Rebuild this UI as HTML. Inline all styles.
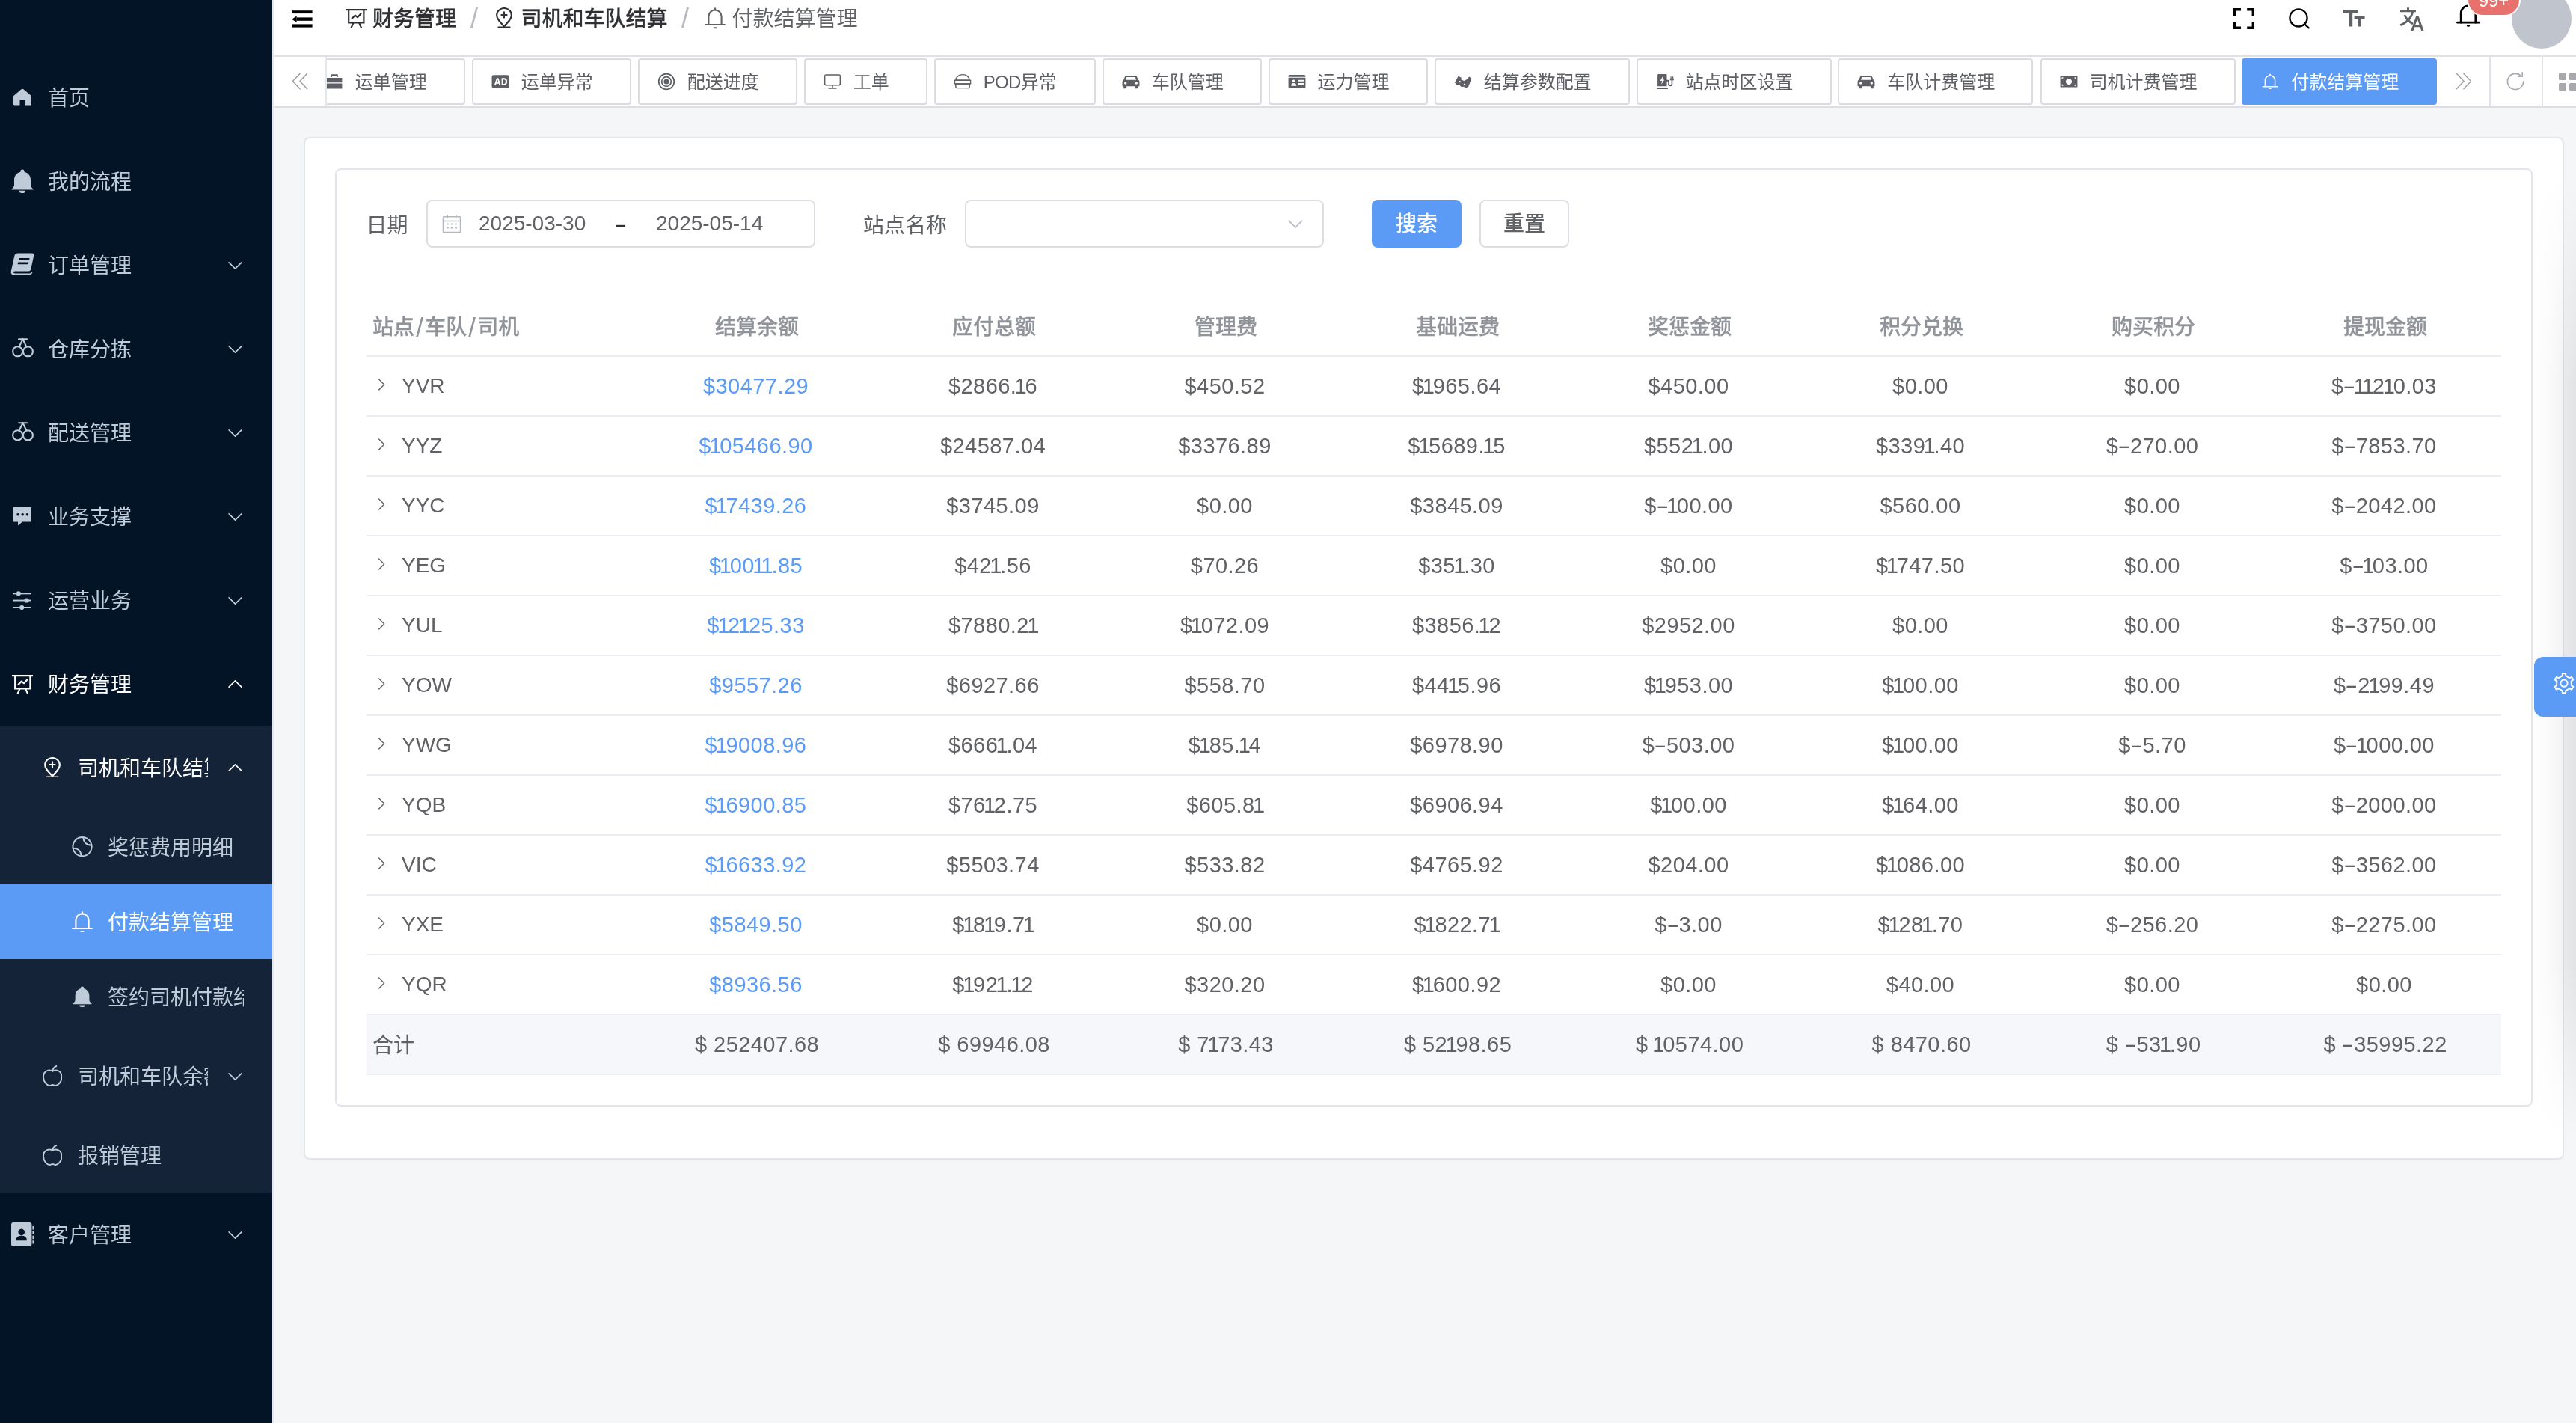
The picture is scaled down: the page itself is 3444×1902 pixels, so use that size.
<!DOCTYPE html><html lang="zh-CN"><head><meta charset="utf-8"><title>付款结算管理</title><style>
*{box-sizing:border-box;margin:0;padding:0}
html,body{width:3444px;height:1902px;overflow:hidden;background:#f5f6f8;font-family:"Liberation Sans","Noto Sans CJK SC",sans-serif;color:#606266}
svg{display:block}
#side,#head,#tabs,#main{will-change:transform}
#main{position:absolute;left:0;top:0;width:3444px;height:1902px;z-index:0}
#side,#head,#tabs{z-index:2}
#side{position:absolute;left:0;top:0;width:364px;height:1902px;background:#041427;overflow:hidden}
#sub{position:absolute;left:0;top:970px;width:364px;height:624px;background:#152339}
.mi{position:absolute;left:0;width:364px;color:#bfcbd9;font-size:28px;white-space:nowrap}
.mi .ic{position:absolute;top:50%;margin-top:-14px}
.mi .tx{position:absolute;top:-1px;height:100%;overflow:hidden;display:flex;align-items:center}
.mi .ar{position:absolute;left:301.5px;top:50%;margin-top:-12.5px}
.mi.w{color:#fff}
.mi.act{background:#5b9bf6;color:#fff}
#head{position:absolute;left:364px;top:-26px;width:3080px;height:102px;background:#fff;border-bottom:2px solid #dfe1e6}
.abs{position:absolute}
#tabs{position:absolute;left:364px;top:76px;width:3080px;height:68px;background:#fff;border-bottom:2px solid #dcdee3;}
.tab{position:absolute;top:2px;height:62px;border:2px solid #dbdce1;border-radius:4px;background:#fff;color:#5d5f65;font-size:24px;white-space:nowrap}
.tab .ic{position:absolute;left:24px;top:17px}
.tab .tx{position:absolute;left:64px;top:0;line-height:59px}
.tab.on{background:#5b9bf6;border-color:#5b9bf6;color:#fff}
#card1{position:absolute;left:406px;top:183px;width:3022px;height:1367px;background:#fff;border:2px solid #e4e5eb;border-radius:8px;box-shadow:0 1px 6px rgba(0,0,0,.025)}
#card2{position:absolute;left:448px;top:225px;width:2938px;height:1254px;background:#fff;border:2px solid #e4e5eb;border-radius:8px;box-shadow:0 1px 6px rgba(0,0,0,.02)}
.lbl{position:absolute;font-size:28px;color:#606266;line-height:64px;top:269.5px}
.inp{position:absolute;top:267px;height:64px;border:2px solid #dcdee3;border-radius:8px;background:#fff}
.btn{position:absolute;top:267px;height:64px;width:120px;border-radius:8px;font-size:28px;line-height:62px;text-align:center;font-weight:500}
#tbl{position:absolute;left:490px;top:397px;width:2854px}
.r{position:absolute;left:0;width:2854px;height:80px;border-bottom:2px solid #ebedf2}
.c{position:absolute;top:0;height:78px;line-height:78px;font-size:28px;text-align:center;white-space:nowrap}
.n{font-size:29px;letter-spacing:.45px}
.o{font-style:normal;margin:0 -2.7px}
.m{display:inline-block;font-style:normal;transform:scaleX(1.75);margin:0 2.8px}
.hd .c{color:#909399;font-weight:500;-webkit-text-stroke:0.3px currentColor;line-height:82px}
.hd .c i{font-style:normal;margin:0 2.2px;font-weight:400;-webkit-text-stroke:0;font-size:35px;position:relative;top:3px;line-height:1px}
.c.b{color:#5b9bf6}
.ft{background:#f5f7fa}
</style></head><body>
<div id="side"><div id="sub"></div>
<div class="mi " style="top:74px;height:112px"><span class="ic" style="left:16px"><svg viewBox="0 0 1024 1024" width="28" height="28" fill="currentColor" style="" ><path d="M512 96 Q540 96 566 118 L930 430 Q950 448 950 480 V880 Q950 930 900 930 H640 V640 H384 V930 H124 Q74 930 74 880 V480 Q74 448 94 430 L458 118 Q484 96 512 96Z"/></svg></span><span class="tx" style="left:64px;width:262px">首页</span></div>
<div class="mi " style="top:186px;height:112px"><svg viewBox="0 0 30 32" width="30" height="32" fill="currentColor" style="position:absolute;left:15.00px;top:39.60px;"><path d="M15 0.5 a2.6 2.6 0 0 1 2.6 2.6 v0.6 C23.2 5 26 9.6 26 14.6 V21 C26 23.4 27.6 25 29.4 26.6 Q30 27.4 29 27.6 H1 Q0 27.4 0.6 26.6 C2.4 25 4 23.4 4 21 V14.6 C4 9.6 6.8 5 12.4 3.7 v-0.6 A2.6 2.6 0 0 1 15 0.5Z"/><path d="M10.8 28.8 H19.2 A4.2 3.4 0 0 1 10.8 28.8Z"/></svg><span class="tx" style="left:64px;width:262px">我的流程</span></div>
<div class="mi " style="top:298px;height:112px"><svg viewBox="0 0 32 30" width="32" height="30" fill="currentColor" style="position:absolute;left:14.00px;top:40.40px;"><path d="M9.6 0.6 H28.6 Q32 0.6 31.2 4 L27.2 22 Q26.6 24.6 24 24.6 H6.2 Q4 24.6 4 26 Q4 27.4 6.2 27.4 H25.6 Q27.4 27.4 28.4 25.4 L29.4 25.8 Q28.4 29.6 24.6 29.6 H5 Q0 29.6 0.8 24.6 L5.4 3.8 Q6.2 0.6 9.6 0.6Z M11.4 7 L10.8 9.6 H25 L25.6 7Z M10.2 12.6 L9.6 15.2 H23.8 L24.4 12.6Z" fill-rule="evenodd"/></svg><span class="tx" style="left:64px;width:214px">订单管理</span><span class="ar"><svg viewBox="0 0 1024 1024" width="25" height="25" fill="currentColor" style="" ><path fill="none" stroke="currentColor" stroke-width="70" stroke-linecap="round" stroke-linejoin="round" d="M170 360 L512 700 L854 360"/></svg></span></div>
<div class="mi " style="top:410px;height:112px"><svg viewBox="0 0 29 26" width="29" height="26" fill="currentColor" style="position:absolute;left:15.50px;top:42.00px;"><g fill="none" stroke="currentColor" stroke-width="2.1" stroke-linecap="round" stroke-linejoin="round"><circle cx="7.6" cy="17.8" r="6.5"/><circle cx="21.4" cy="17.8" r="6.5"/><path d="M9 1.2 H20"/><path d="M14.5 1.2 L9.6 11.6 M14.5 1.2 L19.4 11.6"/></g></svg><span class="tx" style="left:64px;width:214px">仓库分拣</span><span class="ar"><svg viewBox="0 0 1024 1024" width="25" height="25" fill="currentColor" style="" ><path fill="none" stroke="currentColor" stroke-width="70" stroke-linecap="round" stroke-linejoin="round" d="M170 360 L512 700 L854 360"/></svg></span></div>
<div class="mi " style="top:522px;height:112px"><svg viewBox="0 0 29 26" width="29" height="26" fill="currentColor" style="position:absolute;left:15.50px;top:42.00px;"><g fill="none" stroke="currentColor" stroke-width="2.1" stroke-linecap="round" stroke-linejoin="round"><circle cx="7.6" cy="17.8" r="6.5"/><circle cx="21.4" cy="17.8" r="6.5"/><path d="M9 1.2 H20"/><path d="M14.5 1.2 L9.6 11.6 M14.5 1.2 L19.4 11.6"/></g></svg><span class="tx" style="left:64px;width:214px">配送管理</span><span class="ar"><svg viewBox="0 0 1024 1024" width="25" height="25" fill="currentColor" style="" ><path fill="none" stroke="currentColor" stroke-width="70" stroke-linecap="round" stroke-linejoin="round" d="M170 360 L512 700 L854 360"/></svg></span></div>
<div class="mi " style="top:634px;height:112px"><svg viewBox="0 0 24.4 24.6" width="24.4" height="24.6" fill="currentColor" style="position:absolute;left:17.80px;top:44.00px;"><path d="M0 0 H24.4 V19.4 H12 L6 24.6 V19.4 H0Z M6 8 a1.7 1.7 0 1 0 0.01 0Z M12.2 8 a1.7 1.7 0 1 0 0.01 0Z M18.4 8 a1.7 1.7 0 1 0 0.01 0Z" fill-rule="evenodd"/></svg><span class="tx" style="left:64px;width:214px">业务支撑</span><span class="ar"><svg viewBox="0 0 1024 1024" width="25" height="25" fill="currentColor" style="" ><path fill="none" stroke="currentColor" stroke-width="70" stroke-linecap="round" stroke-linejoin="round" d="M170 360 L512 700 L854 360"/></svg></span></div>
<div class="mi " style="top:746px;height:112px"><svg viewBox="0 0 24.4 25" width="24.4" height="25" fill="currentColor" style="position:absolute;left:17.80px;top:44.10px;"><g><rect x="0" y="2.4" width="24.4" height="1.9"/><rect x="0" y="11.6" width="24.4" height="1.9"/><rect x="0" y="21" width="24.4" height="1.9"/><circle cx="6.8" cy="3.3" r="3.1"/><circle cx="17.6" cy="12.5" r="3.1"/><circle cx="11.2" cy="22" r="3.1"/></g></svg><span class="tx" style="left:64px;width:214px">运营业务</span><span class="ar"><svg viewBox="0 0 1024 1024" width="25" height="25" fill="currentColor" style="" ><path fill="none" stroke="currentColor" stroke-width="70" stroke-linecap="round" stroke-linejoin="round" d="M170 360 L512 700 L854 360"/></svg></span></div>
<div class="mi w" style="top:858px;height:112px"><svg viewBox="0 0 28.6 26" width="28.6" height="26" fill="currentColor" style="position:absolute;left:15.70px;top:43.80px;"><g fill="none" stroke="currentColor" stroke-width="2.2" stroke-linejoin="miter" stroke-linecap="butt"><path d="M0 1.1 H28.6"/><path d="M4.2 1.1 V18.4 H24.4 V1.1"/><path d="M8.6 12.8 L12.8 8.6 L16 11.2 L20.6 6.2" stroke-linecap="round" stroke-linejoin="round"/><path d="M10.4 18.6 L7.4 25.6 M18.2 18.6 L21.2 25.6" stroke-linecap="round"/></g></svg><span class="tx" style="left:64px;width:214px">财务管理</span><span class="ar"><svg viewBox="0 0 1024 1024" width="25" height="25" fill="currentColor" style="" ><path fill="none" stroke="currentColor" stroke-width="70" stroke-linecap="round" stroke-linejoin="round" d="M170 664 L512 324 L854 664"/></svg></span></div>
<div class="mi w" style="top:970px;height:112px"><svg viewBox="0 0 22 27.6" width="22" height="27.6" fill="currentColor" style="position:absolute;left:59.00px;top:41.90px;"><g fill="none" stroke="currentColor" stroke-width="2.1" stroke-linecap="round" stroke-linejoin="round"><path d="M11 25.2 C5.4 19.4 1.1 14.8 1.1 10.4 A9.9 9.4 0 0 1 20.9 10.4 C20.9 14.8 16.6 19.4 11 25.2Z"/><path d="M11 6.4 V13.6 M7.4 10 H14.6"/><path d="M3.4 26.5 H18.6"/></g></svg><span class="tx" style="left:104px;width:174px">司机和车队结算</span><span class="ar"><svg viewBox="0 0 1024 1024" width="25" height="25" fill="currentColor" style="" ><path fill="none" stroke="currentColor" stroke-width="70" stroke-linecap="round" stroke-linejoin="round" d="M170 664 L512 324 L854 664"/></svg></span></div>
<div class="mi " style="top:1082px;height:100px"><svg viewBox="0 0 28 27.4" width="28" height="27.4" fill="currentColor" style="position:absolute;left:96.00px;top:36.30px;"><g fill="none" stroke="currentColor" stroke-width="2"><circle cx="14" cy="13.7" r="12.6"/><path d="M15.4 1.2 C15.6 8 20 11.6 26.4 11.6"/><path d="M1.6 15.8 C8 15.8 12.4 19.4 12.6 26.2"/></g></svg><span class="tx" style="left:144px;width:182px">奖惩费用明细</span></div>
<div class="mi act" style="top:1182px;height:100px"><svg viewBox="0 0 28 28.4" width="28" height="28.4" fill="currentColor" style="position:absolute;left:96.00px;top:35.80px;"><g fill="none" stroke="currentColor" stroke-width="2.1" stroke-linecap="round" stroke-linejoin="round"><path d="M14 3.4 V1.2"/><path d="M5.4 23 V12 A8.6 8.6 0 0 1 22.6 12 V23"/><path d="M1.1 23 H26.9"/><path d="M12.6 27.2 H15.4"/></g></svg><span class="tx" style="left:144px;width:182px">付款结算管理</span></div>
<div class="mi " style="top:1282px;height:100px"><svg viewBox="0 0 26 28" width="26" height="28" fill="currentColor" style="position:absolute;left:97.00px;top:36.00px;"><path d="M13 0.4 a2.2 2.2 0 0 1 2.2 2.2 v0.6 C20 4.4 22.4 8.4 22.4 12.8 V18.4 C22.4 20.4 23.8 21.8 25.4 23.2 Q26 24 25 24.2 H1 Q0 24 0.6 23.2 C2.2 21.8 3.6 20.4 3.6 18.4 V12.8 C3.6 8.4 6 4.4 10.8 3.2 v-0.6 A2.2 2.2 0 0 1 13 0.4Z"/><path d="M9.2 25.4 H16.8 A3.8 2.8 0 0 1 9.2 25.4Z"/></svg><span class="tx" style="left:144px;width:182px">签约司机付款结算</span></div>
<div class="mi " style="top:1382px;height:112px"><svg viewBox="0 0 26.6 28" width="26.6" height="28" fill="currentColor" style="position:absolute;left:56.70px;top:42.00px;"><g fill="none" stroke="currentColor" stroke-width="1.9" stroke-linecap="round" stroke-linejoin="round"><path d="M13.3 7.8 C10 5.4 1 6 1 15.6 C1 22.6 6.4 27 9 27 C11 27 12 26 13.3 26 C14.6 26 15.6 27 17.6 27 C20.2 27 25.6 22.6 25.6 15.6 C25.6 6 16.6 5.4 13.3 7.8Z"/><path d="M13.3 7.6 C13.6 4.4 15.4 2.2 18.4 1"/></g></svg><span class="tx" style="left:104px;width:174px">司机和车队余额</span><span class="ar"><svg viewBox="0 0 1024 1024" width="25" height="25" fill="currentColor" style="" ><path fill="none" stroke="currentColor" stroke-width="70" stroke-linecap="round" stroke-linejoin="round" d="M170 360 L512 700 L854 360"/></svg></span></div>
<div class="mi " style="top:1494px;height:100px"><svg viewBox="0 0 26.6 28" width="26.6" height="28" fill="currentColor" style="position:absolute;left:56.70px;top:36.00px;"><g fill="none" stroke="currentColor" stroke-width="1.9" stroke-linecap="round" stroke-linejoin="round"><path d="M13.3 7.8 C10 5.4 1 6 1 15.6 C1 22.6 6.4 27 9 27 C11 27 12 26 13.3 26 C14.6 26 15.6 27 17.6 27 C20.2 27 25.6 22.6 25.6 15.6 C25.6 6 16.6 5.4 13.3 7.8Z"/><path d="M13.3 7.6 C13.6 4.4 15.4 2.2 18.4 1"/></g></svg><span class="tx" style="left:104px;width:222px">报销管理</span></div>
<div class="mi " style="top:1594px;height:112px"><svg viewBox="0 0 30.4 32" width="30.4" height="32" fill="currentColor" style="position:absolute;left:14.80px;top:40.00px;"><path d="M3 0 H24.4 Q27.4 0 27.4 3 V29 Q27.4 32 24.4 32 H3 Q0 32 0 29 V3 Q0 0 3 0Z M13.7 8.6 a4.3 4.3 0 1 0 0.01 0Z M6.6 23.4 Q6.6 17.8 13.7 17.8 Q20.8 17.8 20.8 23.4 V24.2 H6.6Z M28.4 5 h2 v4.4 h-2Z M28.4 11.4 h2 v4.4 h-2Z M28.4 17.8 h2 v4.4 h-2Z M28.4 24.2 h2 v4.4 h-2Z" fill-rule="evenodd"/></svg><span class="tx" style="left:64px;width:214px">客户管理</span><span class="ar"><svg viewBox="0 0 1024 1024" width="25" height="25" fill="currentColor" style="" ><path fill="none" stroke="currentColor" stroke-width="70" stroke-linecap="round" stroke-linejoin="round" d="M170 360 L512 700 L854 360"/></svg></span></div>
</div>
<div id="head">
<svg viewBox="0 0 28 23" width="28" height="23" fill="#000" style="position:absolute;left:26px;top:39.5px"><rect x="0" y="0.2" width="27.6" height="3.9"/><rect x="6.6" y="9.4" width="21" height="4.4"/><rect x="0" y="18.4" width="27.6" height="4.2"/><path d="M0.3 11.7 L6.6 7.4 V16Z"/></svg>
<svg viewBox="0 0 28.6 26" width="28.6" height="26" fill="currentColor" style="position:absolute;left:98.00px;top:37.80px;color:#2f3033"><g fill="none" stroke="currentColor" stroke-width="2.2" stroke-linejoin="miter" stroke-linecap="butt"><path d="M0 1.1 H28.6"/><path d="M4.2 1.1 V18.4 H24.4 V1.1"/><path d="M8.6 12.8 L12.8 8.6 L16 11.2 L20.6 6.2" stroke-linecap="round" stroke-linejoin="round"/><path d="M10.4 18.6 L7.4 25.6 M18.2 18.6 L21.2 25.6" stroke-linecap="round"/></g></svg>
<span class="abs" style="left:134px;top:28px;line-height:48px;font-size:28px;font-weight:500;-webkit-text-stroke:0.3px currentColor;color:#2f3033;white-space:nowrap">财务管理</span>
<span class="abs" style="left:265px;top:27px;line-height:48px;font-size:36px;color:#b8bac2">/</span>
<svg viewBox="0 0 22 27.6" width="22" height="27.6" fill="currentColor" style="position:absolute;left:299.00px;top:36.10px;color:#2f3033"><g fill="none" stroke="currentColor" stroke-width="2.1" stroke-linecap="round" stroke-linejoin="round"><path d="M11 25.2 C5.4 19.4 1.1 14.8 1.1 10.4 A9.9 9.4 0 0 1 20.9 10.4 C20.9 14.8 16.6 19.4 11 25.2Z"/><path d="M11 6.4 V13.6 M7.4 10 H14.6"/><path d="M3.4 26.5 H18.6"/></g></svg>
<span class="abs" style="left:332.5px;top:28px;line-height:48px;font-size:28px;font-weight:500;-webkit-text-stroke:0.3px currentColor;color:#2f3033;white-space:nowrap">司机和车队结算</span>
<span class="abs" style="left:547px;top:27px;line-height:48px;font-size:36px;color:#b8bac2">/</span>
<svg viewBox="0 0 28 28.4" width="28" height="28.4" fill="currentColor" style="position:absolute;left:577.80px;top:36.40px;color:#606266"><g fill="none" stroke="currentColor" stroke-width="2.1" stroke-linecap="round" stroke-linejoin="round"><path d="M14 3.4 V1.2"/><path d="M5.4 23 V12 A8.6 8.6 0 0 1 22.6 12 V23"/><path d="M1.1 23 H26.9"/><path d="M12.6 27.2 H15.4"/></g></svg>
<span class="abs" style="left:614.5px;top:28px;line-height:48px;font-size:28px;color:#606266;white-space:nowrap">付款结算管理</span>
<svg viewBox="0 0 28.2 28" width="28.2" height="28" fill="#000" style="position:absolute;left:2621.6px;top:37px"><path d="M0 0 H10 V3.6 H3.6 V10 H0Z M18.2 0 H28.2 V10 H24.6 V3.6 H18.2Z M0 18 H3.6 V24.4 H10 V28 H0Z M24.6 18 H28.2 V28 H18.2 V24.4 H24.6Z"/></svg>
<svg viewBox="0 0 30 30" width="30" height="30" style="position:absolute;left:2695px;top:36px"><g fill="none" stroke="#000" stroke-width="2.3" stroke-linecap="round"><circle cx="14" cy="13.9" r="11.6"/><path d="M22.6 22.6 L27.6 27.4"/></g></svg>
<svg viewBox="0 0 29 23" width="29" height="23" fill="#606266" style="position:absolute;left:2769px;top:39px"><path d="M0 0 H19 V4.4 H12.2 V22.6 H7 V4.4 H0Z M14.6 8 H28.6 V12 H24 V22.6 H19.2 V12 H14.6Z"/></svg>
<span class="abs" style="left:2842.7px;top:34.5px;color:#606266"><svg viewBox="0 0 1024 1024" width="34" height="34" fill="currentColor" style="" ><path d="M60 130 H330 V40 H420 V130 H690 V220 H600 C580 340 520 450 440 540 C480 580 530 620 590 650 L550 730 C480 690 420 650 375 605 C300 680 200 740 90 780 L50 700 C150 660 240 610 310 540 C260 480 220 410 200 340 H290 C310 390 340 440 375 480 C440 410 490 320 510 220 H60Z"/><path d="M700 380 H800 L1010 960 H910 L860 820 H640 L590 960 H490Z M670 730 H830 L750 500Z"/></svg></span>
<span class="abs" style="left:2994px;top:11px;width:80px;height:80px;border-radius:40px;background:#c0c4cc"></span>
<svg viewBox="0 0 28 28.4" width="32" height="32.4" style="position:absolute;left:2919.8px;top:29.7px;color:#000"><g fill="none" stroke="currentColor" stroke-width="2.4" stroke-linecap="round" stroke-linejoin="round"><path d="M5.4 23 V12 A8.6 8.6 0 0 1 22.6 12 V23"/><path d="M1.2 23 H26.8"/></g><path d="M12 26 H16 A2 1.9 0 0 1 12 26Z" fill="currentColor"/></svg>
<span class="abs" style="left:2934px;top:4px;width:72px;height:44px;border-radius:22px;background:#e6716d;border:2px solid #fff;color:#fff;font-size:24px;line-height:42px;text-align:center">99+</span>
</div>
<div id="tabs">
<div class="tab" style="left:44.80000000000001px;width:213px"><span class="ic"><svg viewBox="0 0 1024 1024" width="24" height="24" fill="currentColor" style="" ><path d="M360 100 H664 Q720 100 720 156 V260 H640 V180 H384 V260 H304 V156 Q304 100 360 100Z M70 300 H954 V560 H70Z M70 620 H954 V920 H70Z"/></svg></span><span class="tx">运单管理</span></div>
<div class="tab" style="left:266.79999999999995px;width:213px"><span class="ic"><svg viewBox="0 0 1024 1024" width="24" height="24" fill="currentColor" style="" ><path d="M120 140 H904 Q1000 140 1000 236 V788 Q1000 884 904 884 H120 Q24 884 24 788 V236 Q24 140 120 140Z M300 310 L160 720 H250 L278 630 H420 L448 720 H540 L400 310Z M350 400 L398 556 H300Z M580 310 V720 H720 Q900 720 900 515 Q900 310 720 310Z M665 390 H715 Q810 390 810 515 Q810 640 715 640 H665Z" fill-rule="evenodd"/></svg></span><span class="tx">运单异常</span></div>
<div class="tab" style="left:488.79999999999995px;width:213px"><span class="ic"><svg viewBox="0 0 1024 1024" width="24" height="24" fill="currentColor" style="" ><g fill="none" stroke="currentColor" stroke-width="72"><circle cx="512" cy="512" r="440"/><circle cx="512" cy="512" r="270"/></g><circle cx="512" cy="512" r="150"/></svg></span><span class="tx">配送进度</span></div>
<div class="tab" style="left:710.8px;width:165px"><span class="ic"><svg viewBox="0 0 1024 1024" width="24" height="24" fill="currentColor" style="" ><g fill="none" stroke="currentColor" stroke-width="64" stroke-linecap="round" stroke-linejoin="round"><rect x="70" y="130" width="884" height="580" rx="80"/><path d="M512 710 V900 M300 900 H724"/></g></svg></span><span class="tx">工单</span></div>
<div class="tab" style="left:884.8px;width:216px"><span class="ic"><svg viewBox="0 0 1024 1024" width="24" height="24" fill="currentColor" style="" ><g fill="none" stroke="currentColor" stroke-width="60" stroke-linecap="round" stroke-linejoin="round"><path d="M120 440 A392 330 0 0 1 904 440Z"/><path d="M60 440 H964 V640 H60Z" /><path d="M120 640 H904 V800 Q904 880 824 880 H200 Q120 880 120 800Z"/></g></svg></span><span class="tx"><span style="letter-spacing:-0.7px">POD</span>异常</span></div>
<div class="tab" style="left:1109.8px;width:213px"><span class="ic"><svg viewBox="0 0 1024 1024" width="24" height="24" fill="currentColor" style="" ><path d="M250 170 H774 Q830 170 850 220 L930 420 Q1000 440 1000 520 V780 H930 V870 Q930 910 890 910 H800 Q760 910 760 870 V780 H264 V870 Q264 910 224 910 H134 Q94 910 94 870 V780 H24 V520 Q24 440 94 420 L174 220 Q194 170 250 170Z M270 260 L210 420 H814 L754 260Z M200 530 a70 70 0 1 0 0.1 0Z M824 530 a70 70 0 1 0 0.1 0Z" fill-rule="evenodd"/></svg></span><span class="tx">车队管理</span></div>
<div class="tab" style="left:1331.5px;width:213px"><span class="ic"><svg viewBox="0 0 1024 1024" width="24" height="24" fill="currentColor" style="" ><path d="M100 130 H924 Q1000 130 1000 206 V818 Q1000 894 924 894 H100 Q24 894 24 818 V206 Q24 130 100 130Z M24 250 H1000 V290 H24Z M330 400 a80 80 0 1 0 0.1 0Z M180 760 Q180 600 330 600 Q480 600 480 760Z M560 420 H900 V500 H560Z M560 600 H900 V680 H560Z" fill-rule="evenodd"/></svg></span><span class="tx">运力管理</span></div>
<div class="tab" style="left:1553.7px;width:261px"><span class="ic"><svg viewBox="0 0 1024 1024" width="24" height="24" fill="currentColor" style="" ><path d="M40 560 L240 200 L420 290 L380 380 L560 470 L700 400 L860 230 L1000 330 L820 800 L640 900 L560 800 L420 820 L300 700 L160 720Z M330 470 a50 50 0 1 0 0.1 0Z M600 620 a50 50 0 1 0 0.1 0Z" fill-rule="evenodd"/></svg></span><span class="tx">结算参数配置</span></div>
<div class="tab" style="left:1823.6px;width:261px"><span class="ic"><svg viewBox="0 0 1024 1024" width="24" height="24" fill="currentColor" style="" ><path d="M150 90 H560 Q620 90 620 150 V780 H90 V150 Q90 90 150 90Z M400 200 L240 470 H350 L300 680 L480 400 H370Z M40 850 H680 V940 H40Z M620 420 H700 Q760 420 760 480 V640 Q760 700 820 700 Q880 700 880 640 V440 H800 V330 H830 V220 H880 V330 H940 V220 H990 V330 H1020 V440 H950 V650 Q950 780 820 780 Q690 780 690 650 V500 H620Z" fill-rule="evenodd"/></svg></span><span class="tx">站点时区设置</span></div>
<div class="tab" style="left:2093.3px;width:261px"><span class="ic"><svg viewBox="0 0 1024 1024" width="24" height="24" fill="currentColor" style="" ><path d="M250 170 H774 Q830 170 850 220 L930 420 Q1000 440 1000 520 V780 H930 V870 Q930 910 890 910 H800 Q760 910 760 870 V780 H264 V870 Q264 910 224 910 H134 Q94 910 94 870 V780 H24 V520 Q24 440 94 420 L174 220 Q194 170 250 170Z M270 260 L210 420 H814 L754 260Z M200 530 a70 70 0 1 0 0.1 0Z M824 530 a70 70 0 1 0 0.1 0Z" fill-rule="evenodd"/></svg></span><span class="tx">车队计费管理</span></div>
<div class="tab" style="left:2363.5px;width:261px"><span class="ic"><svg viewBox="0 0 1024 1024" width="24" height="24" fill="currentColor" style="" ><path d="M24 190 H1000 V834 H24Z M512 340 a172 172 0 1 0 0.1 0Z M110 270 V360 Q200 360 200 270Z M914 270 H824 Q824 360 914 360Z M110 754 H200 Q200 664 110 664Z M914 754 V664 Q824 664 824 754Z" fill-rule="evenodd"/></svg></span><span class="tx">司机计费管理</span></div>
<div class="tab on" style="left:2633.2px;width:261px"><span class="ic"><svg viewBox="0 0 1024 1024" width="24" height="24" fill="currentColor" style="" ><g fill="none" stroke="currentColor" stroke-width="64" stroke-linecap="round" stroke-linejoin="round"><path d="M512 150 V100"/><path d="M230 800 V450 A282 282 0 0 1 794 450 V800"/><path d="M90 800 H934"/><path d="M470 910 H554"/></g></svg></span><span class="tx">付款结算管理</span></div>
<div class="abs" style="left:0;top:0;width:73px;height:66px;background:#fff;border-right:2px solid #e4e6eb"></div>
<span class="abs" style="left:23.5px;top:19px;color:#9a9ca2"><svg viewBox="0 0 1024 1024" width="27" height="27" fill="currentColor" style="" ><path fill="none" stroke="currentColor" stroke-width="56" stroke-linecap="round" stroke-linejoin="round" d="M500 120 L130 512 L500 904 M860 120 L490 512 L860 904"/></svg></span>
<div class="abs" style="left:2894.5px;top:0;width:186px;height:66px;background:#fff"></div>
<div class="abs" style="left:2894.5px;top:0;width:1.5px;height:66px;background:#eceef2"></div>
<div class="abs" style="left:2964px;top:0;width:2px;height:66px;background:#e1e3e8"></div>
<div class="abs" style="left:3034px;top:0;width:2px;height:66px;background:#e1e3e8"></div>
<span class="abs" style="left:2915.5px;top:19px;color:#a0a2a8"><svg viewBox="0 0 1024 1024" width="27" height="27" fill="currentColor" style="" ><path fill="none" stroke="currentColor" stroke-width="56" stroke-linecap="round" stroke-linejoin="round" d="M164 120 L534 512 L164 904 M524 120 L894 512 L524 904"/></svg></span>
<span class="abs" style="left:2985px;top:19px;color:#a8aaaf"><svg viewBox="0 0 1024 1024" width="28" height="28" fill="currentColor" style="" ><g fill="none" stroke="currentColor" stroke-width="60" stroke-linecap="round" stroke-linejoin="round"><path d="M900 512 A388 388 0 1 1 790 240"/><path d="M650 260 H850 V70"/></g></svg></span>
<div class="abs" style="left:3057px;top:21px;width:10px;height:10px;border-radius:1.5px;background:#a9a9ad"></div>
<div class="abs" style="left:3071px;top:21px;width:10px;height:10px;border-radius:1.5px;background:#a9a9ad"></div>
<div class="abs" style="left:3057px;top:35px;width:10px;height:10px;border-radius:1.5px;background:#a9a9ad"></div>
<div class="abs" style="left:3071px;top:35px;width:10px;height:10px;border-radius:1.5px;background:#a9a9ad"></div>
</div>
<div id="main"><div id="card1"></div><div id="card2"></div>
<span class="lbl" style="left:489.5px">日期</span>
<div class="inp" style="left:570px;width:520px"></div>
<span class="abs" style="left:590px;top:285px;color:#b4b7be"><svg viewBox="0 0 1024 1024" width="28" height="28" fill="currentColor" style="" ><g fill="none" stroke="currentColor" stroke-width="56" stroke-linejoin="round"><rect x="90" y="170" width="844" height="760" rx="30"/><path d="M90 380 H934 M300 80 V250 M724 80 V250"/></g><g><rect x="260" y="500" width="100" height="60"/><rect x="462" y="500" width="100" height="60"/><rect x="664" y="500" width="100" height="60"/><rect x="260" y="690" width="100" height="60"/><rect x="462" y="690" width="100" height="60"/><rect x="664" y="690" width="100" height="60"/></g></svg></span>
<span class="abs" style="left:640px;top:267px;line-height:64px;font-size:28px;color:#606266">2025-03-30</span>
<span class="abs" style="left:825.2px;top:268px;line-height:64px;font-size:28px;color:#303133;transform:scaleX(1.9)">-</span>
<span class="abs" style="left:877px;top:267px;line-height:64px;font-size:28px;color:#606266">2025-05-14</span>
<span class="lbl" style="left:1154px">站点名称</span>
<div class="inp" style="left:1290px;width:480px"></div>
<span class="abs" style="left:1718.5px;top:286px;color:#bbbec5"><svg viewBox="0 0 1024 1024" width="26" height="26" fill="currentColor" style="" ><path fill="none" stroke="currentColor" stroke-width="70" stroke-linecap="round" stroke-linejoin="round" d="M170 360 L512 700 L854 360"/></svg></span>
<div class="btn" style="left:1834px;background:#5b9bf6;color:#fff;border:2px solid #5b9bf6">搜索</div>
<div class="btn" style="left:1978px;background:#fff;color:#606266;border:2px solid #dcdee3">重置</div>
<div id="tbl">
<div class="r hd" style="top:0">
<span class="c" style="left:8px;text-align:left">站点<i>/</i>车队<i>/</i>司机</span>
<span class="c" style="left:372.0px;width:300px">结算余额</span>
<span class="c" style="left:689.0px;width:300px">应付总额</span>
<span class="c" style="left:999.0px;width:300px">管理费</span>
<span class="c" style="left:1309.0px;width:300px">基础运费</span>
<span class="c" style="left:1619.0px;width:300px">奖惩金额</span>
<span class="c" style="left:1929.0px;width:300px">积分兑换</span>
<span class="c" style="left:2239.0px;width:300px">购买积分</span>
<span class="c" style="left:2549.0px;width:300px">提现金额</span>
</div>
<div class="r" style="top:80px">
<span class="abs" style="left:10px;top:27px;color:#606266"><svg viewBox="0 0 1024 1024" width="20" height="20" fill="currentColor" style="" ><path fill="none" stroke="currentColor" stroke-width="70" stroke-linecap="round" stroke-linejoin="round" d="M340 150 L700 512 L340 874"/></svg></span>
<span class="c" style="left:47px;text-align:left">YVR</span>
<span class="c n b" style="left:370.5px;width:300px">$30477.29</span>
<span class="c n" style="left:687.5px;width:300px">$2866.<i class="o">1</i>6</span>
<span class="c n" style="left:997.5px;width:300px">$450.52</span>
<span class="c n" style="left:1307.5px;width:300px">$<i class="o">1</i>965.64</span>
<span class="c n" style="left:1617.5px;width:300px">$450.00</span>
<span class="c n" style="left:1927.5px;width:300px">$0.00</span>
<span class="c n" style="left:2237.5px;width:300px">$0.00</span>
<span class="c n" style="left:2547.5px;width:300px">$<i class="m">-</i><i class="o">1</i><i class="o">1</i>2<i class="o">1</i>0.03</span>
</div>
<div class="r" style="top:160px">
<span class="abs" style="left:10px;top:27px;color:#606266"><svg viewBox="0 0 1024 1024" width="20" height="20" fill="currentColor" style="" ><path fill="none" stroke="currentColor" stroke-width="70" stroke-linecap="round" stroke-linejoin="round" d="M340 150 L700 512 L340 874"/></svg></span>
<span class="c" style="left:47px;text-align:left">YYZ</span>
<span class="c n b" style="left:370.5px;width:300px">$<i class="o">1</i>05466.90</span>
<span class="c n" style="left:687.5px;width:300px">$24587.04</span>
<span class="c n" style="left:997.5px;width:300px">$3376.89</span>
<span class="c n" style="left:1307.5px;width:300px">$<i class="o">1</i>5689.<i class="o">1</i>5</span>
<span class="c n" style="left:1617.5px;width:300px">$552<i class="o">1</i>.00</span>
<span class="c n" style="left:1927.5px;width:300px">$339<i class="o">1</i>.40</span>
<span class="c n" style="left:2237.5px;width:300px">$<i class="m">-</i>270.00</span>
<span class="c n" style="left:2547.5px;width:300px">$<i class="m">-</i>7853.70</span>
</div>
<div class="r" style="top:240px">
<span class="abs" style="left:10px;top:27px;color:#606266"><svg viewBox="0 0 1024 1024" width="20" height="20" fill="currentColor" style="" ><path fill="none" stroke="currentColor" stroke-width="70" stroke-linecap="round" stroke-linejoin="round" d="M340 150 L700 512 L340 874"/></svg></span>
<span class="c" style="left:47px;text-align:left">YYC</span>
<span class="c n b" style="left:370.5px;width:300px">$<i class="o">1</i>7439.26</span>
<span class="c n" style="left:687.5px;width:300px">$3745.09</span>
<span class="c n" style="left:997.5px;width:300px">$0.00</span>
<span class="c n" style="left:1307.5px;width:300px">$3845.09</span>
<span class="c n" style="left:1617.5px;width:300px">$<i class="m">-</i><i class="o">1</i>00.00</span>
<span class="c n" style="left:1927.5px;width:300px">$560.00</span>
<span class="c n" style="left:2237.5px;width:300px">$0.00</span>
<span class="c n" style="left:2547.5px;width:300px">$<i class="m">-</i>2042.00</span>
</div>
<div class="r" style="top:320px">
<span class="abs" style="left:10px;top:27px;color:#606266"><svg viewBox="0 0 1024 1024" width="20" height="20" fill="currentColor" style="" ><path fill="none" stroke="currentColor" stroke-width="70" stroke-linecap="round" stroke-linejoin="round" d="M340 150 L700 512 L340 874"/></svg></span>
<span class="c" style="left:47px;text-align:left">YEG</span>
<span class="c n b" style="left:370.5px;width:300px">$<i class="o">1</i>00<i class="o">1</i><i class="o">1</i>.85</span>
<span class="c n" style="left:687.5px;width:300px">$42<i class="o">1</i>.56</span>
<span class="c n" style="left:997.5px;width:300px">$70.26</span>
<span class="c n" style="left:1307.5px;width:300px">$35<i class="o">1</i>.30</span>
<span class="c n" style="left:1617.5px;width:300px">$0.00</span>
<span class="c n" style="left:1927.5px;width:300px">$<i class="o">1</i>747.50</span>
<span class="c n" style="left:2237.5px;width:300px">$0.00</span>
<span class="c n" style="left:2547.5px;width:300px">$<i class="m">-</i><i class="o">1</i>03.00</span>
</div>
<div class="r" style="top:400px">
<span class="abs" style="left:10px;top:27px;color:#606266"><svg viewBox="0 0 1024 1024" width="20" height="20" fill="currentColor" style="" ><path fill="none" stroke="currentColor" stroke-width="70" stroke-linecap="round" stroke-linejoin="round" d="M340 150 L700 512 L340 874"/></svg></span>
<span class="c" style="left:47px;text-align:left">YUL</span>
<span class="c n b" style="left:370.5px;width:300px">$<i class="o">1</i>2<i class="o">1</i>25.33</span>
<span class="c n" style="left:687.5px;width:300px">$7880.2<i class="o">1</i></span>
<span class="c n" style="left:997.5px;width:300px">$<i class="o">1</i>072.09</span>
<span class="c n" style="left:1307.5px;width:300px">$3856.<i class="o">1</i>2</span>
<span class="c n" style="left:1617.5px;width:300px">$2952.00</span>
<span class="c n" style="left:1927.5px;width:300px">$0.00</span>
<span class="c n" style="left:2237.5px;width:300px">$0.00</span>
<span class="c n" style="left:2547.5px;width:300px">$<i class="m">-</i>3750.00</span>
</div>
<div class="r" style="top:480px">
<span class="abs" style="left:10px;top:27px;color:#606266"><svg viewBox="0 0 1024 1024" width="20" height="20" fill="currentColor" style="" ><path fill="none" stroke="currentColor" stroke-width="70" stroke-linecap="round" stroke-linejoin="round" d="M340 150 L700 512 L340 874"/></svg></span>
<span class="c" style="left:47px;text-align:left">YOW</span>
<span class="c n b" style="left:370.5px;width:300px">$9557.26</span>
<span class="c n" style="left:687.5px;width:300px">$6927.66</span>
<span class="c n" style="left:997.5px;width:300px">$558.70</span>
<span class="c n" style="left:1307.5px;width:300px">$44<i class="o">1</i>5.96</span>
<span class="c n" style="left:1617.5px;width:300px">$<i class="o">1</i>953.00</span>
<span class="c n" style="left:1927.5px;width:300px">$<i class="o">1</i>00.00</span>
<span class="c n" style="left:2237.5px;width:300px">$0.00</span>
<span class="c n" style="left:2547.5px;width:300px">$<i class="m">-</i>2<i class="o">1</i>99.49</span>
</div>
<div class="r" style="top:560px">
<span class="abs" style="left:10px;top:27px;color:#606266"><svg viewBox="0 0 1024 1024" width="20" height="20" fill="currentColor" style="" ><path fill="none" stroke="currentColor" stroke-width="70" stroke-linecap="round" stroke-linejoin="round" d="M340 150 L700 512 L340 874"/></svg></span>
<span class="c" style="left:47px;text-align:left">YWG</span>
<span class="c n b" style="left:370.5px;width:300px">$<i class="o">1</i>9008.96</span>
<span class="c n" style="left:687.5px;width:300px">$666<i class="o">1</i>.04</span>
<span class="c n" style="left:997.5px;width:300px">$<i class="o">1</i>85.<i class="o">1</i>4</span>
<span class="c n" style="left:1307.5px;width:300px">$6978.90</span>
<span class="c n" style="left:1617.5px;width:300px">$<i class="m">-</i>503.00</span>
<span class="c n" style="left:1927.5px;width:300px">$<i class="o">1</i>00.00</span>
<span class="c n" style="left:2237.5px;width:300px">$<i class="m">-</i>5.70</span>
<span class="c n" style="left:2547.5px;width:300px">$<i class="m">-</i><i class="o">1</i>000.00</span>
</div>
<div class="r" style="top:640px">
<span class="abs" style="left:10px;top:27px;color:#606266"><svg viewBox="0 0 1024 1024" width="20" height="20" fill="currentColor" style="" ><path fill="none" stroke="currentColor" stroke-width="70" stroke-linecap="round" stroke-linejoin="round" d="M340 150 L700 512 L340 874"/></svg></span>
<span class="c" style="left:47px;text-align:left">YQB</span>
<span class="c n b" style="left:370.5px;width:300px">$<i class="o">1</i>6900.85</span>
<span class="c n" style="left:687.5px;width:300px">$76<i class="o">1</i>2.75</span>
<span class="c n" style="left:997.5px;width:300px">$605.8<i class="o">1</i></span>
<span class="c n" style="left:1307.5px;width:300px">$6906.94</span>
<span class="c n" style="left:1617.5px;width:300px">$<i class="o">1</i>00.00</span>
<span class="c n" style="left:1927.5px;width:300px">$<i class="o">1</i>64.00</span>
<span class="c n" style="left:2237.5px;width:300px">$0.00</span>
<span class="c n" style="left:2547.5px;width:300px">$<i class="m">-</i>2000.00</span>
</div>
<div class="r" style="top:720px">
<span class="abs" style="left:10px;top:27px;color:#606266"><svg viewBox="0 0 1024 1024" width="20" height="20" fill="currentColor" style="" ><path fill="none" stroke="currentColor" stroke-width="70" stroke-linecap="round" stroke-linejoin="round" d="M340 150 L700 512 L340 874"/></svg></span>
<span class="c" style="left:47px;text-align:left">VIC</span>
<span class="c n b" style="left:370.5px;width:300px">$<i class="o">1</i>6633.92</span>
<span class="c n" style="left:687.5px;width:300px">$5503.74</span>
<span class="c n" style="left:997.5px;width:300px">$533.82</span>
<span class="c n" style="left:1307.5px;width:300px">$4765.92</span>
<span class="c n" style="left:1617.5px;width:300px">$204.00</span>
<span class="c n" style="left:1927.5px;width:300px">$<i class="o">1</i>086.00</span>
<span class="c n" style="left:2237.5px;width:300px">$0.00</span>
<span class="c n" style="left:2547.5px;width:300px">$<i class="m">-</i>3562.00</span>
</div>
<div class="r" style="top:800px">
<span class="abs" style="left:10px;top:27px;color:#606266"><svg viewBox="0 0 1024 1024" width="20" height="20" fill="currentColor" style="" ><path fill="none" stroke="currentColor" stroke-width="70" stroke-linecap="round" stroke-linejoin="round" d="M340 150 L700 512 L340 874"/></svg></span>
<span class="c" style="left:47px;text-align:left">YXE</span>
<span class="c n b" style="left:370.5px;width:300px">$5849.50</span>
<span class="c n" style="left:687.5px;width:300px">$<i class="o">1</i>8<i class="o">1</i>9.7<i class="o">1</i></span>
<span class="c n" style="left:997.5px;width:300px">$0.00</span>
<span class="c n" style="left:1307.5px;width:300px">$<i class="o">1</i>822.7<i class="o">1</i></span>
<span class="c n" style="left:1617.5px;width:300px">$<i class="m">-</i>3.00</span>
<span class="c n" style="left:1927.5px;width:300px">$<i class="o">1</i>28<i class="o">1</i>.70</span>
<span class="c n" style="left:2237.5px;width:300px">$<i class="m">-</i>256.20</span>
<span class="c n" style="left:2547.5px;width:300px">$<i class="m">-</i>2275.00</span>
</div>
<div class="r" style="top:880px">
<span class="abs" style="left:10px;top:27px;color:#606266"><svg viewBox="0 0 1024 1024" width="20" height="20" fill="currentColor" style="" ><path fill="none" stroke="currentColor" stroke-width="70" stroke-linecap="round" stroke-linejoin="round" d="M340 150 L700 512 L340 874"/></svg></span>
<span class="c" style="left:47px;text-align:left">YQR</span>
<span class="c n b" style="left:370.5px;width:300px">$8936.56</span>
<span class="c n" style="left:687.5px;width:300px">$<i class="o">1</i>92<i class="o">1</i>.<i class="o">1</i>2</span>
<span class="c n" style="left:997.5px;width:300px">$320.20</span>
<span class="c n" style="left:1307.5px;width:300px">$<i class="o">1</i>600.92</span>
<span class="c n" style="left:1617.5px;width:300px">$0.00</span>
<span class="c n" style="left:1927.5px;width:300px">$40.00</span>
<span class="c n" style="left:2237.5px;width:300px">$0.00</span>
<span class="c n" style="left:2547.5px;width:300px">$0.00</span>
</div>
<div class="r ft" style="top:960px">
<span class="c" style="left:8px;text-align:left;line-height:82px">合计</span>
<span class="c n" style="left:372.1px;width:300px">$ 252407.68</span>
<span class="c n" style="left:689.1px;width:300px">$ 69946.08</span>
<span class="c n" style="left:999.1px;width:300px">$ 7<i class="o">1</i>73.43</span>
<span class="c n" style="left:1309.1px;width:300px">$ 52<i class="o">1</i>98.65</span>
<span class="c n" style="left:1619.1px;width:300px">$ <i class="o">1</i>0574.00</span>
<span class="c n" style="left:1929.1px;width:300px">$ 8470.60</span>
<span class="c n" style="left:2239.1px;width:300px">$ <i class="m">-</i>53<i class="o">1</i>.90</span>
<span class="c n" style="left:2549.1px;width:300px">$ <i class="m">-</i>35995.22</span>
</div>
</div>
<div class="abs" style="left:3384px;top:230px;width:60px;height:1290px;background:linear-gradient(to right,rgba(0,0,0,0),rgba(0,0,0,.018) 40%,rgba(0,0,0,.075));-webkit-mask-image:linear-gradient(to bottom,transparent,#000 22%,#000 82%,transparent);mask-image:linear-gradient(to bottom,transparent,#000 22%,#000 82%,transparent)"></div>
<div class="abs" style="left:3388px;top:878px;width:80px;height:80px;border-radius:12px;background:#5b9bf6;color:#fff"><svg viewBox="0 0 28 28.4" width="28" height="28.4" style="position:absolute;left:26px;top:20.6px"><g fill="none" stroke="#fff" stroke-width="2" stroke-linejoin="round"><path d="M11.57 4.29 L11.94 1.16 L16.06 1.16 L16.43 4.29 L21.36 7.14 L24.26 5.89 L26.32 9.47 L23.79 11.35 L23.79 17.05 L26.32 18.93 L24.26 22.51 L21.36 21.26 L16.43 24.11 L16.06 27.24 L11.94 27.24 L11.57 24.11 L6.64 21.26 L3.74 22.51 L1.68 18.93 L4.21 17.05 L4.21 11.35 L1.68 9.47 L3.74 5.89 L6.64 7.14Z"/><circle cx="14" cy="14.2" r="4.6"/></g></svg></div>
</div>
<div class="abs" style="left:364px;top:0;width:2px;height:1902px;background:#e3e8f1;z-index:9"></div>
</body></html>
